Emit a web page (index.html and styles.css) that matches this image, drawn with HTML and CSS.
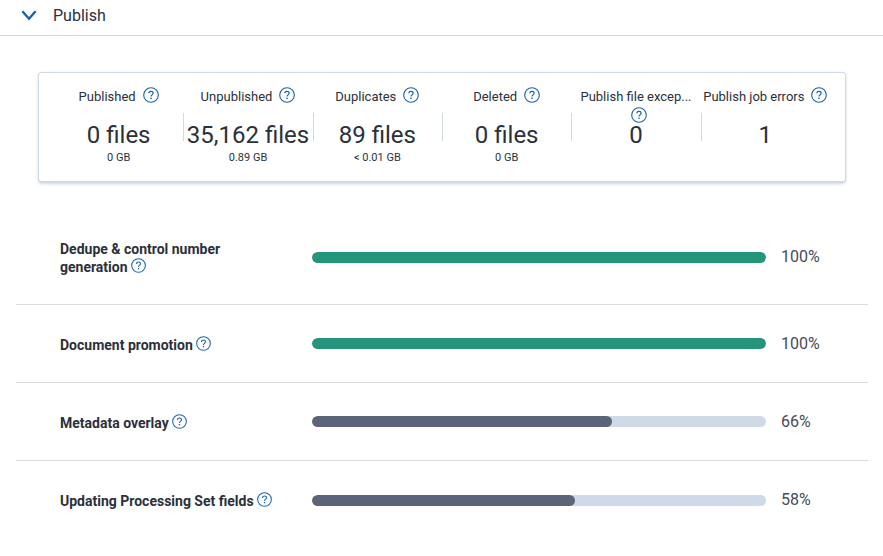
FILE: index.html
```
<!DOCTYPE html>
<html lang="en">
<head>
  <meta charset="UTF-8" />
  <meta name="viewport" content="width=device-width, initial-scale=1" />
  <title>Publish</title>
  <link rel="stylesheet" href="styles.css">
</head>
<body>
  <svg class="sprite" aria-hidden="true">
    <symbol id="icon-help" viewBox="0 0 16 16">
      <circle cx="8" cy="8" r="7.3" fill="none" stroke="currentColor" stroke-width="1.1" />
      <path d="M5.9 6.3C5.9 5 6.8 4.3 8 4.3s2.1.7 2.1 1.8c0 .9-.5 1.3-1.1 1.8C8.3 8.4 8 8.7 8 9.5" fill="none" stroke="currentColor" stroke-width="1.2" />
      <rect x="7.3" y="10.6" width="1.4" height="1.4" fill="currentColor" />
    </symbol>
  </svg>

  <header class="section-header">
    <button class="toggle" type="button" aria-label="Collapse Publish" aria-expanded="true">
      <svg viewBox="0 0 16 12"><path d="M1.4 1.2L8 8.7l6.6-7.5" fill="none" stroke="currentColor" stroke-width="2.4" /></svg>
    </button>
    <h1>Publish</h1>
  </header>

  <main>
    <section class="stats">
      <div class="stat">
        <div class="stat-head"><span class="stat-label">Published</span><button class="help" type="button" aria-label="Help"><svg><use href="#icon-help" /></svg></button></div>
        <div class="stat-value">0 files</div>
        <div class="stat-size">0 GB</div>
      </div>
      <div class="stat">
        <div class="stat-head"><span class="stat-label">Unpublished</span><button class="help" type="button" aria-label="Help"><svg><use href="#icon-help" /></svg></button></div>
        <div class="stat-value">35,162 files</div>
        <div class="stat-size">0.89 GB</div>
      </div>
      <div class="stat">
        <div class="stat-head"><span class="stat-label">Duplicates</span><button class="help" type="button" aria-label="Help"><svg><use href="#icon-help" /></svg></button></div>
        <div class="stat-value">89 files</div>
        <div class="stat-size">&lt; 0.01 GB</div>
      </div>
      <div class="stat">
        <div class="stat-head"><span class="stat-label">Deleted</span><button class="help" type="button" aria-label="Help"><svg><use href="#icon-help" /></svg></button></div>
        <div class="stat-value">0 files</div>
        <div class="stat-size">0 GB</div>
      </div>
      <div class="stat">
        <div class="stat-head"><span class="stat-label">Publish file excep...</span><button class="help" type="button" aria-label="Help"><svg><use href="#icon-help" /></svg></button></div>
        <div class="stat-value">0</div>
      </div>
      <div class="stat">
        <div class="stat-head"><span class="stat-label">Publish job errors</span><button class="help" type="button" aria-label="Help"><svg><use href="#icon-help" /></svg></button></div>
        <div class="stat-value">1</div>
      </div>
    </section>

    <section class="steps">
      <div class="step">
        <div class="step-label"><span id="step-dedupe">Dedupe &amp; control number generation</span> <button class="help" type="button" aria-label="Help"><svg><use href="#icon-help" /></svg></button></div>
        <div class="bar" role="progressbar" aria-labelledby="step-dedupe" aria-valuenow="100"><div class="bar-fill done" style="width: 100%"></div></div>
        <div class="percent">100%</div>
      </div>
      <div class="step">
        <div class="step-label"><span id="step-promotion">Document promotion</span> <button class="help" type="button" aria-label="Help"><svg><use href="#icon-help" /></svg></button></div>
        <div class="bar" role="progressbar" aria-labelledby="step-promotion" aria-valuenow="100"><div class="bar-fill done" style="width: 100%"></div></div>
        <div class="percent">100%</div>
      </div>
      <div class="step">
        <div class="step-label"><span id="step-overlay">Metadata overlay</span> <button class="help" type="button" aria-label="Help"><svg><use href="#icon-help" /></svg></button></div>
        <div class="bar" role="progressbar" aria-labelledby="step-overlay" aria-valuenow="66"><div class="bar-fill" style="width: 66%"></div></div>
        <div class="percent">66%</div>
      </div>
      <div class="step">
        <div class="step-label"><span id="step-fields">Updating Processing Set fields</span> <button class="help" type="button" aria-label="Help"><svg><use href="#icon-help" /></svg></button></div>
        <div class="bar" role="progressbar" aria-labelledby="step-fields" aria-valuenow="58"><div class="bar-fill" style="width: 58%"></div></div>
        <div class="percent">58%</div>
      </div>
    </section>
  </main>
</body>
</html>
```
FILE: styles.css
```
* {
  box-sizing: border-box;
}

body {
  margin: 0;
  background-color: #fff;
  color: #2b303b;
  font-family: Roboto, "Liberation Sans", sans-serif;
}

.sprite {
  display: none;
}

button {
  padding: 0;
  border: none;
  background: none;
  color: #1a62b0;
  cursor: pointer;
}

.section-header {
  display: flex;
  align-items: center;
  gap: 16px;
  height: 36px;
  padding: 0 21px 4px;
  border-bottom: 1px solid #d0d7e6;
}

.section-header h1 {
  margin: 0;
  font-size: 16px;
  font-weight: 400;
  line-height: 20px;
}

.toggle svg {
  display: block;
  width: 16px;
  height: 12px;
}

.help {
  width: 16px;
  height: 16px;
}

.help svg {
  display: block;
  width: 100%;
  height: 100%;
}

/* summary card */
.stats {
  display: grid;
  grid-template-columns: repeat(6, 1fr);
  margin: 36px 37px 0 38px;
  padding: 14px 15px 12px;
  border: 1px solid #d0d9e8;
  border-bottom-width: 2px;
  border-radius: 4px;
  box-shadow: 0 1px 3px rgba(90, 100, 120, 0.25);
}

.stat {
  text-align: center;
  background: linear-gradient(#d0d9e8, #d0d9e8) no-repeat 0 26px / 1px 28px;
}

.stat:first-child {
  background: none;
}

.stat-head {
  height: 36px;
  font-size: 13px;
  line-height: 20px;
}

.stat-label {
  white-space: nowrap;
}

.stat-head .help {
  margin-left: 7px;
  vertical-align: -2px;
}

.stat-value {
  font-size: 24px;
  line-height: 24px;
  white-space: nowrap;
}

.stat-size {
  font-size: 11px;
  line-height: 22px;
}

/* progress rows */
.steps {
  margin: 27px 15px 0 16px;
}

.step {
  display: grid;
  grid-template-columns: 252px 1fr 102px;
  align-items: center;
  min-height: 78px;
  padding-left: 44px;
  border-bottom: 1px solid #dcdcdc;
}

.step:first-child {
  min-height: 95px;
}

.step:last-child {
  border-bottom: none;
}

.step-label {
  max-width: 220px;
  padding-top: 2px;
  font-size: 14px;
  font-weight: 700;
  line-height: 18px;
}

.step-label .help {
  width: 15px;
  height: 15px;
  vertical-align: -1px;
}

.bar {
  height: 11px;
  border-radius: 6px;
  background-color: #d0d9e8;
  overflow: hidden;
}

.bar-fill {
  height: 100%;
  border-radius: 6px;
  background-color: #5b6577;
}

.bar-fill.done {
  background-color: #24957b;
}

.percent {
  padding-left: 15px;
  color: #454c5a;
  font-size: 16px;
  line-height: 20px;
}
```
